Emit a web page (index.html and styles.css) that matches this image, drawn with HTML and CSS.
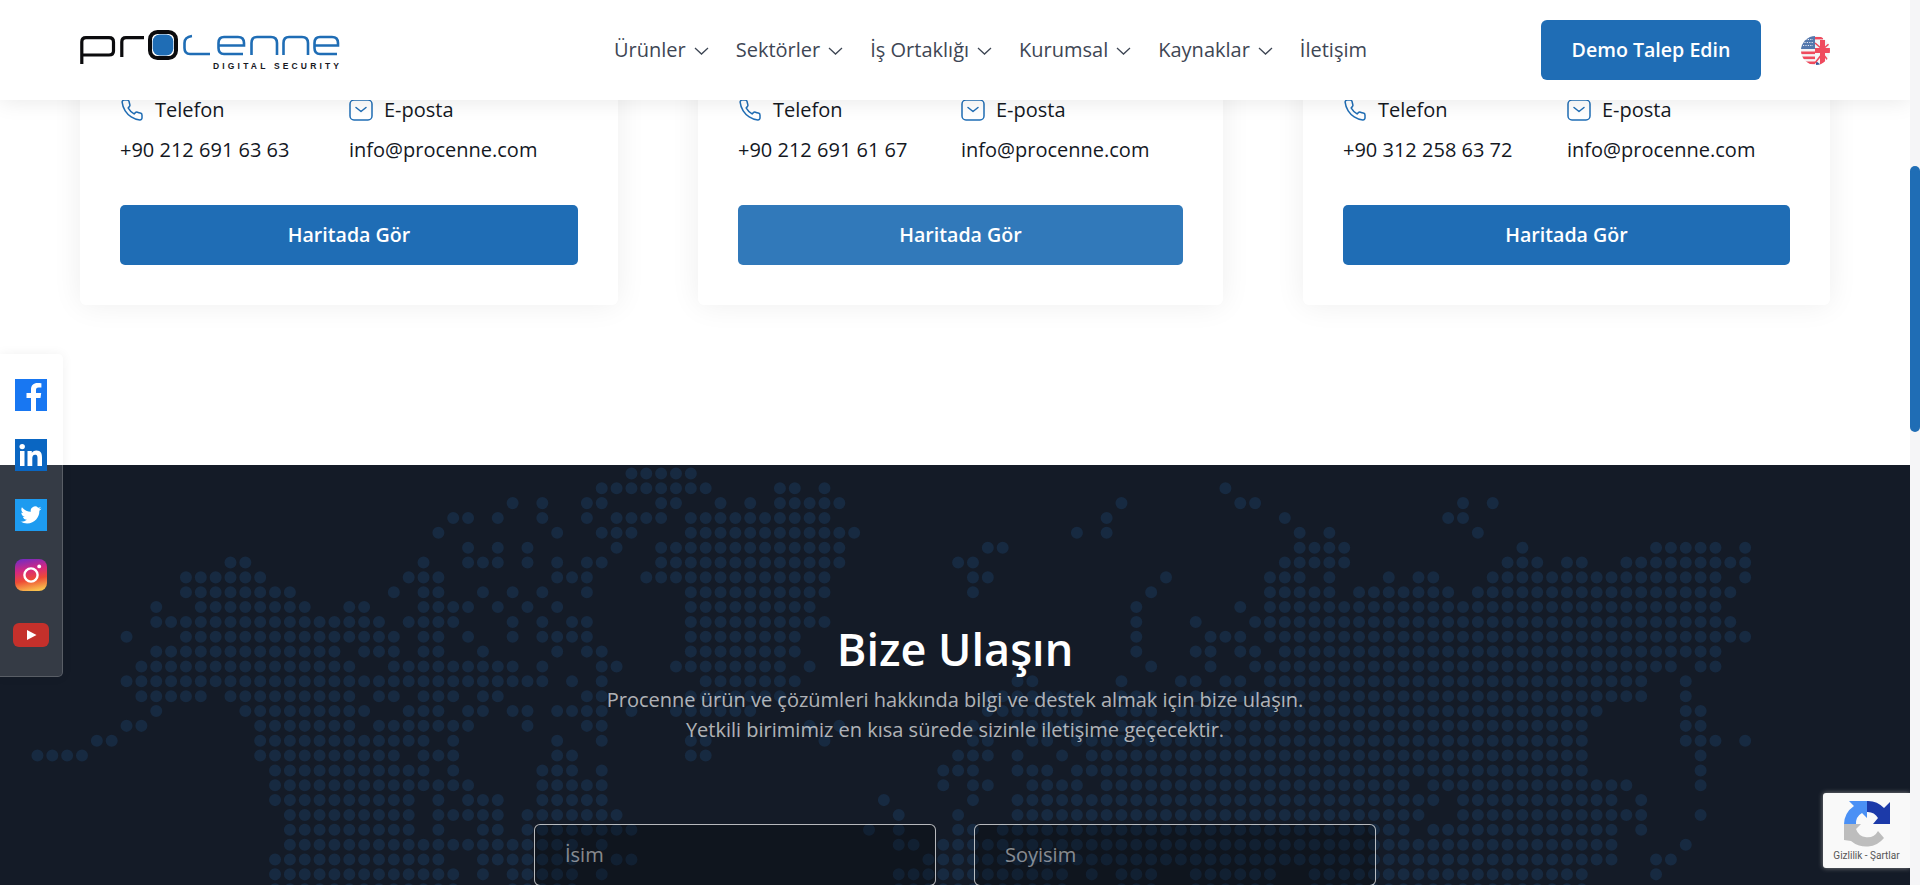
FILE: index.html
```html
<!DOCTYPE html>
<html lang="tr">
<head>
<meta charset="utf-8">
<title>Procenne - İletişim</title>
<link rel="stylesheet" href="styles.css">
</head>
<body>
<div class="shell">
  <div class="page">
    <header class="topbar">
      <a class="logo" href="#" aria-label="Procenne Digital Security">
        <svg width="260" height="40" viewBox="0 0 260 40" fill="none">
          <g stroke="#0b0b0d" stroke-width="3.2">
            <path d="M1.800 34V12Q1.800 7.700 6 7.700H29Q33.500 7.700 33.500 12V21Q33.500 25 29 25H3"/>
            <path d="M41.800 27V12Q41.800 7.700 46 7.700H64"/>
          </g>
          <rect x="70" y="2" width="26" height="26" rx="7.500" stroke="#0b0b0d" stroke-width="4"/>
          <rect x="72.700" y="4.400" width="20.600" height="21.200" rx="7" fill="#1f6db5"/>
          <g stroke="#1f6db5" stroke-width="2.600">
            <path d="M112 6Q104.500 7 104.500 13V18Q104.500 24 110 24H130"/>
            <path d="M139 15.500H164V13Q164 7 158 7H144Q138.500 7 138.500 13V18Q138.500 24 144 24H163"/>
            <path d="M171.500 25V13Q171.500 7 177 7H191Q197 7 197 13V25"/>
            <path d="M203.500 25V13Q203.500 7 209 7H222Q228 7 228 13V25"/>
            <path d="M235 15.500H258V13Q258 7 252 7H240Q234.500 7 234.500 13V18Q234.500 24 240 24H257"/>
          </g>
          <text class="logo-tag" x="133" y="38.500" textLength="126">DIGITAL SECURITY</text>
        </svg>
      </a>
      <nav class="menu">
        <a class="menu-item" href="#">Ürünler<svg class="chev" width="15" height="8" viewBox="0 0 15 8"><path d="M1 1l6.500 6 6.500-6"/></svg></a>
        <a class="menu-item" href="#">Sektörler<svg class="chev" width="15" height="8" viewBox="0 0 15 8"><path d="M1 1l6.500 6 6.500-6"/></svg></a>
        <a class="menu-item" href="#">İş Ortaklığı<svg class="chev" width="15" height="8" viewBox="0 0 15 8"><path d="M1 1l6.500 6 6.500-6"/></svg></a>
        <a class="menu-item" href="#">Kurumsal<svg class="chev" width="15" height="8" viewBox="0 0 15 8"><path d="M1 1l6.500 6 6.500-6"/></svg></a>
        <a class="menu-item" href="#">Kaynaklar<svg class="chev" width="15" height="8" viewBox="0 0 15 8"><path d="M1 1l6.500 6 6.500-6"/></svg></a>
        <a class="menu-item" href="#">İletişim</a>
      </nav>
      <a class="demo-btn" href="#">Demo Talep Edin</a>
      <svg class="flag" width="29" height="29" viewBox="0 0 29 29">
        <defs><clipPath id="flagClip"><circle cx="14.500" cy="14.500" r="14.500"/></clipPath></defs>
        <g clip-path="url(#flagClip)">
          <rect width="29" height="29" fill="#f4f4f6"/>
          <g fill="#ef4a5d">
            <rect x="0" y="15.500" width="14" height="2.600"/>
            <rect x="0" y="20.500" width="14" height="2.600"/>
            <rect x="0" y="25.500" width="14" height="2.600"/>
            <rect x="14" y="1" width="8" height="2.400"/>
          </g>
          <rect width="14" height="13" fill="#5478ad"/>
          <path d="M2 3.500h10M1 6.500h12M2 9.500h10" stroke="#e6e9f2" stroke-width="1.200" stroke-dasharray="1.200 1.200"/>
          <path d="M24 29L29 25V29ZM15 29H20L15 25Z" fill="#3a5a9a"/>
          <path d="M14 7L21 13M29 7L22 13M14 27L21 18M29 27L22 18" stroke="#ef4a5d" stroke-width="1.600"/>
          <rect x="14" y="12" width="15" height="5" fill="#ef4a5d"/>
          <rect x="19" y="4" width="5" height="25" fill="#ef4a5d"/>
        </g>
      </svg>
    </header>

    <section class="offices">
      <article class="office">
        <div class="contact contact-a">
          <div class="label"><svg class="ico" width="24" height="24" viewBox="0 0 24 24"><path d="M22 16.920v3a2 2 0 0 1-2.180 2 19.790 19.790 0 0 1-8.630-3.070 19.500 19.500 0 0 1-6-6 19.790 19.790 0 0 1-3.070-8.670A2 2 0 0 1 4.110 2h3a2 2 0 0 1 2 1.720 12.840 12.840 0 0 0 .7 2.810 2 2 0 0 1-.45 2.110L8.090 9.910a16 16 0 0 0 6 6l1.270-1.270a2 2 0 0 1 2.110-.45 12.840 12.840 0 0 0 2.810.7A2 2 0 0 1 22 16.920z"/></svg>Telefon</div>
          <div class="label"><svg class="ico" width="24" height="24" viewBox="0 0 24 24"><rect x="1" y="2" width="22" height="20" rx="4"/><path d="M7 9.500l5 4 5-4"/></svg>E-posta</div>
          <div class="value">+90 212 691 63 63</div>
          <div class="value">info@procenne.com</div>
        </div>
        <a class="map-btn" href="#">Haritada Gör</a>
      </article>
      <article class="office">
        <div class="contact contact-b">
          <div class="label"><svg class="ico" width="24" height="24" viewBox="0 0 24 24"><path d="M22 16.920v3a2 2 0 0 1-2.180 2 19.790 19.790 0 0 1-8.630-3.070 19.500 19.500 0 0 1-6-6 19.790 19.790 0 0 1-3.070-8.670A2 2 0 0 1 4.110 2h3a2 2 0 0 1 2 1.720 12.840 12.840 0 0 0 .7 2.810 2 2 0 0 1-.45 2.110L8.090 9.910a16 16 0 0 0 6 6l1.270-1.270a2 2 0 0 1 2.110-.45 12.840 12.840 0 0 0 2.810.7A2 2 0 0 1 22 16.920z"/></svg>Telefon</div>
          <div class="label"><svg class="ico" width="24" height="24" viewBox="0 0 24 24"><rect x="1" y="2" width="22" height="20" rx="4"/><path d="M7 9.500l5 4 5-4"/></svg>E-posta</div>
          <div class="value">+90 212 691 61 67</div>
          <div class="value">info@procenne.com</div>
        </div>
        <a class="map-btn map-btn-hover" href="#">Haritada Gör</a>
      </article>
      <article class="office">
        <div class="contact contact-c">
          <div class="label"><svg class="ico" width="24" height="24" viewBox="0 0 24 24"><path d="M22 16.920v3a2 2 0 0 1-2.180 2 19.790 19.790 0 0 1-8.630-3.070 19.500 19.500 0 0 1-6-6 19.790 19.790 0 0 1-3.070-8.670A2 2 0 0 1 4.110 2h3a2 2 0 0 1 2 1.720 12.840 12.840 0 0 0 .7 2.810 2 2 0 0 1-.45 2.110L8.090 9.910a16 16 0 0 0 6 6l1.270-1.270a2 2 0 0 1 2.110-.45 12.840 12.840 0 0 0 2.810.7A2 2 0 0 1 22 16.920z"/></svg>Telefon</div>
          <div class="label"><svg class="ico" width="24" height="24" viewBox="0 0 24 24"><rect x="1" y="2" width="22" height="20" rx="4"/><path d="M7 9.500l5 4 5-4"/></svg>E-posta</div>
          <div class="value">+90 312 258 63 72</div>
          <div class="value">info@procenne.com</div>
        </div>
        <a class="map-btn" href="#">Haritada Gör</a>
      </article>
    </section>

    <section class="reach">
      <svg class="dotmap" width="1722.6" height="430.65" viewBox="-0.5 -0.5 116 29" fill="none" aria-hidden="true">
        <path d="
M40 0h4.01
M38 1h7.01M50 1h1.01M53 1h.01M80 1h.01
M32 2h.01M34 2h.01M37 2h1.01M42 2h1.01M46 2h.01M48 2h.01M50 2h4.01M73 2h.01M81 2h1.01M96 2h.01M98 2h.01
M28 3h1.01M31 3h.01M34 3h.01M37 3h.01M39 3h3.01M44 3h9.01M72 3h.01M84 3h.01M95 3h1.01
M27 4h.01M35 4h.01M38 4h2.01M44 4h11.01M70 4h.01M72 4h.01M85 4h.01M87 4h.01M97 4h.01
M29 5h.01M31 5h.01M33 5h.01M39 5h.01M42 5h12.01M64 5h1.01M85 5h3.01M100 5h.01M109 5h4.01M115 5h.01
M13 6h1.01M26 6h.01M29 6h2.01M33 6h.01M35 6h.01M37 6h1.01M42 6h12.01M62 6h1.01M84 6h4.01M99 6h2.01M103 6h1.01M107 6h8.01
M10 7h5.01M25 7h2.01M35 7h2.01M41 7h12.01M63 7h1.01M76 7h.01M83 7h2.01M87 7h.01M91 7h.01M93 7h1.01M98 7h15.01M115 7h.01
M10 8h7.01M24 8h.01M26 8h1.01M30 8h.01M32 8h.01M34 8h.01M37 8h.01M44 8h9.01M63 8h.01M75 8h.01M83 8h4.01M89 8h6.01M97 8h17.01
M8 9h.01M11 9h7.01M21 9h1.01M26 9h3.01M31 9h.01M33 9h.01M35 9h.01M44 9h8.01M74 9h.01M81 9h.01M83 9h30.01
M8 10h15.01M25 10h3.01M32 10h.01M34 10h.01M36 10h1.01M44 10h9.01M74 10h.01M78 10h.01M82 10h32.01
M6 11h.01M10 11h14.01M26 11h1.01M29 11h.01M32 11h.01M34 11h3.01M44 11h7.01M74 11h.01M79 11h2.01M83 11h32.01
M8 12h12.01M22 12h2.01M26 12h1.01M30 12h.01M35 12h.01M37 12h1.01M44 12h7.01M74 12h.01M78 12h1.01M81 12h1.01M84 12h29.01
M7 13h14.01M24 13h8.01M34 13h.01M38 13h1.01M43 13h7.01M52 13h.01M75 13h.01M79 13h.01M82 13h28.01M112 13h1.01
M6 14h28.01M36 14h.01M38 14h.01M45 14h6.01M66 14h1.01M73 14h.01M77 14h1.01M80 14h1.01M83 14h25.01M111 14h.01
M7 15h4.01M13 15h8.01M23 15h1.01M26 15h2.01M30 15h1.01M37 15h1.01M44 15h6.01M64 15h6.01M73 15h2.01M78 15h30.01M111 15h.01
M8 16h.01M14 16h8.01M25 16h2.01M29 16h1.01M32 16h1.01M35 16h3.01M40 16h.01M43 16h5.01M64 16h6.01M73 16h2.01M77 16h28.01M111 16h1.01
M6 17h1.01M15 17h6.01M23 17h6.01M33 17h.01M37 17h1.01M52 17h.01M54 17h.01M63 17h.01M66 17h4.01M72 17h32.01M111 17h1.01
M4 18h1.01M15 18h11.01M28 18h.01M35 18h.01M38 18h.01M44 18h1.01M53 18h.01M63 18h1.01M67 18h1.01M70 18h34.01M111 18h2.01M115 18h.01
M0 19h3.01M15 19h9.01M26 19h2.01M35 19h1.01M44 19h1.01M62 19h2.01M66 19h.01M69 19h.01M71 19h33.01M112 19h.01
M16 20h10.01M28 20h.01M34 20h2.01M38 20h.01M61 20h2.01M66 20h2.01M70 20h34.01M112 20h.01
M16 21h13.01M34 21h4.01M61 21h.01M63 21h1.01M67 21h3.01M72 21h20.01M94 21h13.01M112 21h.01
M16 22h9.01M27 22h.01M29 22h2.01M34 22h4.01M57 22h.01M63 22h.01M66 22h28.01M96 22h10.01M108 22h.01
M17 23h8.01M27 23h4.01M33 23h6.01M58 23h.01M62 23h.01M66 23h27.01M96 23h12.01M112 23h.01
M17 24h8.01M27 24h.01M30 24h1.01M33 24h7.01M56 24h.01M58 24h.01M62 24h1.01M65 24h27.01M94 24h12.01M108 24h.01
M17 25h19.01M38 25h.01M58 25h1.01M61 25h45.01M111 25h.01
M16 26h11.01M30 26h6.01M39 26h1.01M60 26h46.01M109 26h1.01
M16 27h12.01M30 27h.01M32 27h4.01M38 27h.01M58 27h11.01M71 27h.01M73 27h2.01M78 27h5.01M86 27h18.01M109 27h.01
M16 28h12.01M32 28h4.01M58 28h11.01M73 28h2.01M78 28h5.01M86 28h18.01"/>
      </svg>
      <div class="reach-body">
        <h2 class="reach-title">Bize Ulaşın</h2>
        <p class="reach-text">Procenne ürün ve çözümleri hakkında bilgi ve destek almak için bize ulaşın.<br>Yetkili birimimiz en kısa sürede sizinle iletişime geçecektir.</p>
        <form class="reach-form">
          <input class="field" type="text" placeholder="İsim">
          <input class="field" type="text" placeholder="Soyisim">
        </form>
      </div>
    </section>

    <aside class="social">
      <svg width="32" height="32" viewBox="0 0 32 32"><rect width="32" height="32" fill="#1877f2"/><path fill="#fff" d="M21 32V19h4.500l.7-5H21v-3c0-1.500.5-2.500 2.600-2.500h2.800V4.200C25.900 4.100 24.300 4 22.500 4 18.600 4 16 6.300 16 10.500V14h-4.500v5H16v13z"/></svg>
      <svg width="32" height="32" viewBox="0 0 32 32"><rect width="32" height="32" fill="#0a66c2"/><circle cx="7.200" cy="7.600" r="2.700" fill="#fff"/><path fill="#fff" d="M5 12h4.500v15H5zM12.500 12h4.300v2.100c.7-1.300 2.300-2.500 4.600-2.500 4.600 0 5.600 3 5.600 7V27h-4.500v-7.300c0-1.800 0-4-2.400-4s-2.800 1.900-2.800 3.900V27h-4.800z"/></svg>
      <svg width="32" height="32" viewBox="0 0 32 32"><rect width="32" height="32" fill="#1d9bf0"/><path fill="#fff" transform="translate(5.500 5.500) scale(.875)" d="M23.953 4.570a10 10 0 01-2.825.775 4.958 4.958 0 002.163-2.723c-.951.555-2.005.959-3.127 1.184a4.920 4.920 0 00-8.384 4.482C7.690 8.095 4.067 6.130 1.640 3.162a4.822 4.822 0 00-.666 2.475c0 1.710.87 3.213 2.188 4.096a4.904 4.904 0 01-2.228-.616v.06a4.923 4.923 0 003.946 4.827 4.996 4.996 0 01-2.212.085 4.936 4.936 0 004.604 3.417 9.867 9.867 0 01-6.102 2.105c-.39 0-.779-.023-1.170-.067a13.995 13.995 0 007.557 2.209c9.053 0 13.998-7.496 13.998-13.985 0-.21 0-.42-.015-.63A9.935 9.935 0 0024 4.590z"/></svg>
      <svg width="32" height="32" viewBox="0 0 32 32"><defs><linearGradient id="ig" x1=".35" y1="0" x2=".55" y2="1"><stop offset="0" stop-color="#7b2bbd"/><stop offset=".35" stop-color="#d6287f"/><stop offset=".65" stop-color="#ee4b35"/><stop offset="1" stop-color="#f9c04d"/></linearGradient></defs><rect width="32" height="32" rx="8" fill="url(#ig)"/><circle cx="16" cy="16" r="6.600" fill="none" stroke="#fff" stroke-width="2.400"/><circle cx="24.200" cy="7.400" r="1.900" fill="#fff"/></svg>
      <svg class="yt" width="36" height="24" viewBox="0 0 36 24"><rect width="36" height="24" rx="6" fill="#c4302b"/><path fill="#fff" d="M14 7l9.500 5-9.500 5z"/></svg>
    </aside>

    <div class="captcha">
      <svg width="46" height="47" viewBox="0 0 46 47">
        <path fill="#bdbdbd" d="M0 23H17L12 28A12 12 0 0 0 34 30L40 37A23 23 0 0 1 7 40L0 39Z"/>
        <path fill="#4a90f5" d="M5 0H23V17L18 12A12 12 0 0 0 12 23H0A23 23 0 0 1 10 5Z"/>
        <path fill="#1c3aa9" d="M23 0A23 23 0 0 1 40 7L46 1V23H29L34 17A12 12 0 0 0 23 11Z"/>
      </svg>
      <span class="captcha-links">Gizlilik - Şartlar</span>
    </div>
  </div>
  <div class="scrollbar"><div class="scroll-thumb"></div></div>
</div>
</body>
</html>
```

FILE: styles.css
```css
* { box-sizing: border-box; }
html, body { margin: 0; height: 885px; overflow: hidden; background: #fff; }
body { font-family: "Open Sans", "Noto Sans", sans-serif; color: #14181f; }
a { text-decoration: none; color: inherit; }

.shell { display: flex; height: 885px; }
.page { flex: 1; position: relative; overflow: hidden; height: 885px; }
.scrollbar { width: 10px; background: #f5f5f7; padding-top: 166px; }
.scroll-thumb { height: 266px; background: #1f6db5; border-radius: 5px; }

.topbar {
  position: absolute; top: 0; left: 0; right: 0; z-index: 5;
  height: 100px; padding: 0 80px;
  display: flex; align-items: center;
  background: #fff; box-shadow: 0 0 22px rgba(0, 0, 0, .1);
}
.logo { display: block; width: 260px; height: 40px; }
.logo svg { display: block; }
.logo-tag { font: 700 8.5px "Liberation Sans", sans-serif; fill: #17191f; }
.menu { display: flex; align-items: center; gap: 27px; margin-left: 274px; }
.menu-item { display: flex; align-items: center; gap: 8px; font-size: 20px; color: #3e4654; line-height: 24px; }
.chev { fill: none; stroke: #3e4654; stroke-width: 1.3; margin-top: 2px; }
.demo-btn {
  margin-left: auto; width: 220px; height: 60px; padding-bottom: 1px;
  display: flex; align-items: center; justify-content: center;
  background: #1f6db5; border-radius: 6px;
  color: #fff; font-size: 19.6px; font-weight: 600;
}
.flag { margin-left: 40px; flex: none; }

.offices {
  display: grid; grid-template-columns: 538px 525px 527px; column-gap: 80px;
  padding: 0 80px; height: 465px; background: #fff;
}
.office {
  height: 305px; padding: 95px 40px 40px;
  background: #fff; border-radius: 6px;
  box-shadow: 0 0 30px rgba(0, 0, 0, .07);
}
.contact { display: grid; grid-template-rows: 30px 50px; align-items: center; height: 80px; margin-bottom: 30px; }
.contact-a { grid-template-columns: 229px 1fr; }
.contact-b { grid-template-columns: 223px 1fr; }
.contact-c { grid-template-columns: 224px 1fr; }
.label { display: flex; align-items: center; gap: 11px; font-size: 20px; font-weight: 500; line-height: 24px; }
.value { font-size: 20px; line-height: 24px; }
.ico { fill: none; stroke: #1f6db5; stroke-width: 1.5; stroke-linejoin: round; stroke-linecap: round; flex: none; }
.map-btn {
  display: flex; align-items: center; justify-content: center;
  height: 60px; padding-bottom: 2px; background: #1f6db5; border-radius: 5px;
  color: #fff; font-size: 19.6px; font-weight: 600;
}
.map-btn-hover { background: #3179ba; }

.reach { position: relative; height: 420px; background: #141b27; overflow: hidden; }
.dotmap { position: absolute; left: 30.25px; top: .9px; }
.dotmap path { stroke: #172a41; stroke-width: .81; stroke-linecap: round; stroke-dasharray: 0 1; }
.reach-body { position: relative; padding-top: 154px; text-align: center; }
.reach-title { margin: 0; font-size: 45px; font-weight: 600; line-height: 60px; color: #fff; }
.reach-text { margin: 6px 0 0; font-size: 20px; line-height: 30px; color: rgba(255, 255, 255, .68); }
.reach-form { display: flex; justify-content: center; gap: 38px; margin-top: 79px; }
.field {
  width: 402px; height: 62px; padding: 0 30px 2px;
  background: rgba(0, 0, 0, .22); border: 1px solid rgba(255, 255, 255, .7); border-radius: 6px;
  font: 400 20px "Open Sans", sans-serif; color: #fff; outline: none;
}
.field::placeholder { color: rgba(255, 255, 255, .5); }

.social {
  position: absolute; left: 0; top: 354px; z-index: 4;
  width: 63px; height: 323px; padding-top: 24px;
  display: flex; flex-direction: column; align-items: center; gap: 28px;
  background: rgba(255, 255, 255, .14);
  border: 1px solid rgba(255, 255, 255, .18); border-left: 0;
  border-radius: 0 5px 5px 0;
  box-shadow: 0 0 12px rgba(0, 0, 0, .06);
}
.social svg { display: block; flex: none; }
.social .yt { margin-top: 4px; }

.captcha {
  position: absolute; right: 0; top: 793px; z-index: 4;
  width: 87px; height: 75px; padding-top: 8px;
  display: flex; flex-direction: column; align-items: center;
  background: #f9f9f9; border-radius: 3px 0 0 3px;
  box-shadow: 0 0 5px rgba(160, 160, 160, .8);
}
.captcha svg { display: block; flex: none; }
.captcha-links { margin-top: 1px; font: 400 10px Roboto, sans-serif; line-height: 14px; color: #555; white-space: nowrap; }
```
